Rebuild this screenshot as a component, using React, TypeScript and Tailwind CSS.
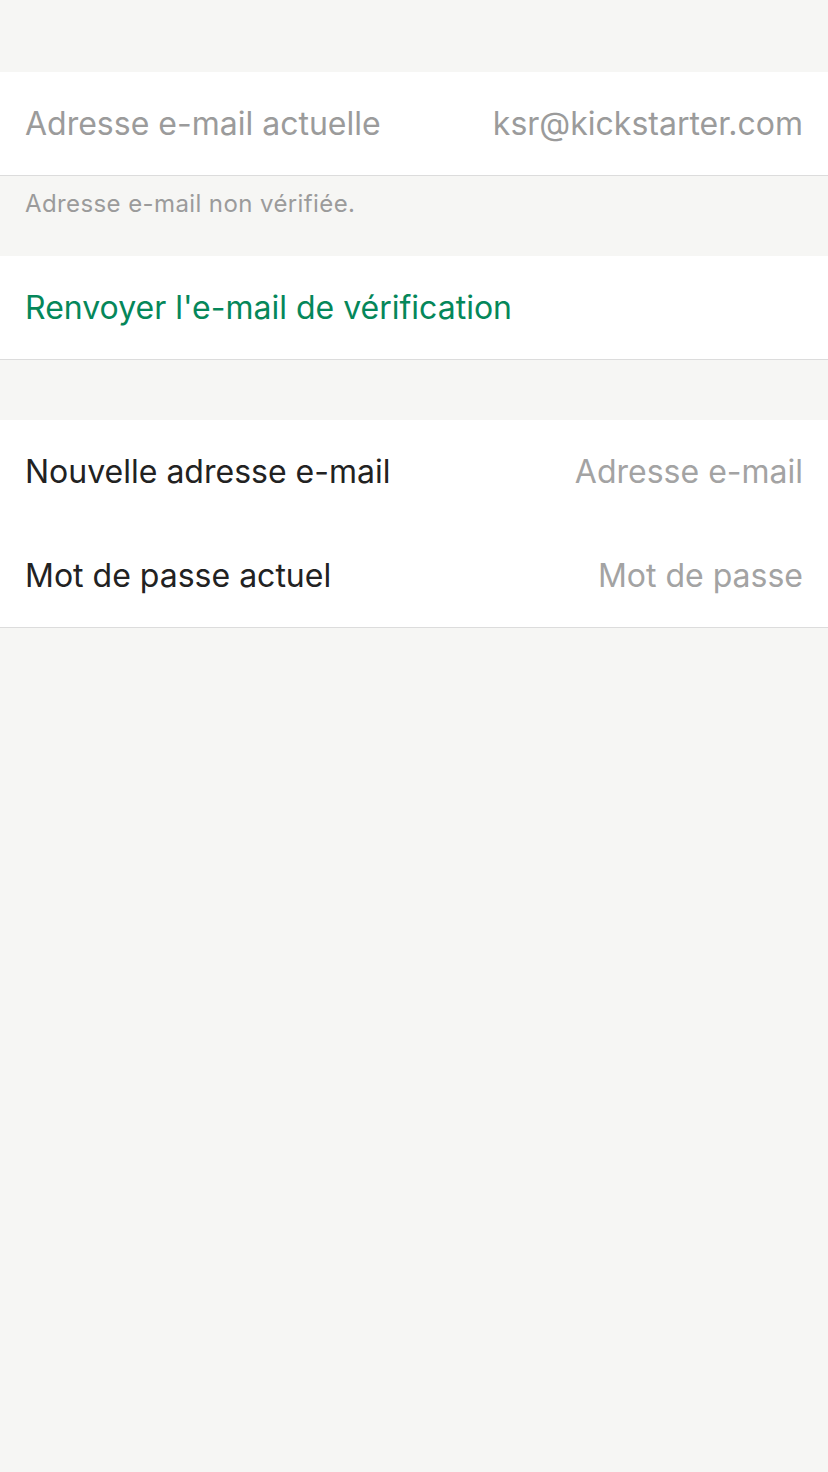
export default function App() {
  const font = { fontFamily: "Inter, 'Noto Sans', sans-serif" };
  return (
    <div className="min-h-[1472px] w-full bg-[#f6f6f4]" style={font}>
      <div className="h-[72px]" />
      <div className="flex h-[104px] items-center justify-between border-b border-[#dcdcdc] bg-white px-[25px] text-[32px] text-[#9b9b9b]">
        <span>Adresse e-mail actuelle</span>
        <span>ksr@kickstarter.com</span>
      </div>
      <div className="h-[80px] px-[25px] pt-[10px] text-[24px] tracking-[0.4px] text-[#9b9b9b]">Adresse e-mail non vérifiée.</div>
      <div className="flex h-[104px] items-center border-b border-[#dcdcdc] bg-white px-[25px] text-[32px] text-[#05875a]">
        Renvoyer l'e-mail de vérification
      </div>
      <div className="h-[60px]" />
      <div className="border-b border-[#dcdcdc] bg-white">
        <div className="flex h-[104px] items-center justify-between px-[25px] text-[32px]">
          <span className="text-[#222]">Nouvelle adresse e-mail</span>
          <span className="text-[#a3a3a3]">Adresse e-mail</span>
        </div>
        <div className="flex h-[103px] items-center justify-between px-[25px] text-[32px]">
          <span className="text-[#222]">Mot de passe actuel</span>
          <span className="text-[#a3a3a3]">Mot de passe</span>
        </div>
      </div>
    </div>
  );
}
